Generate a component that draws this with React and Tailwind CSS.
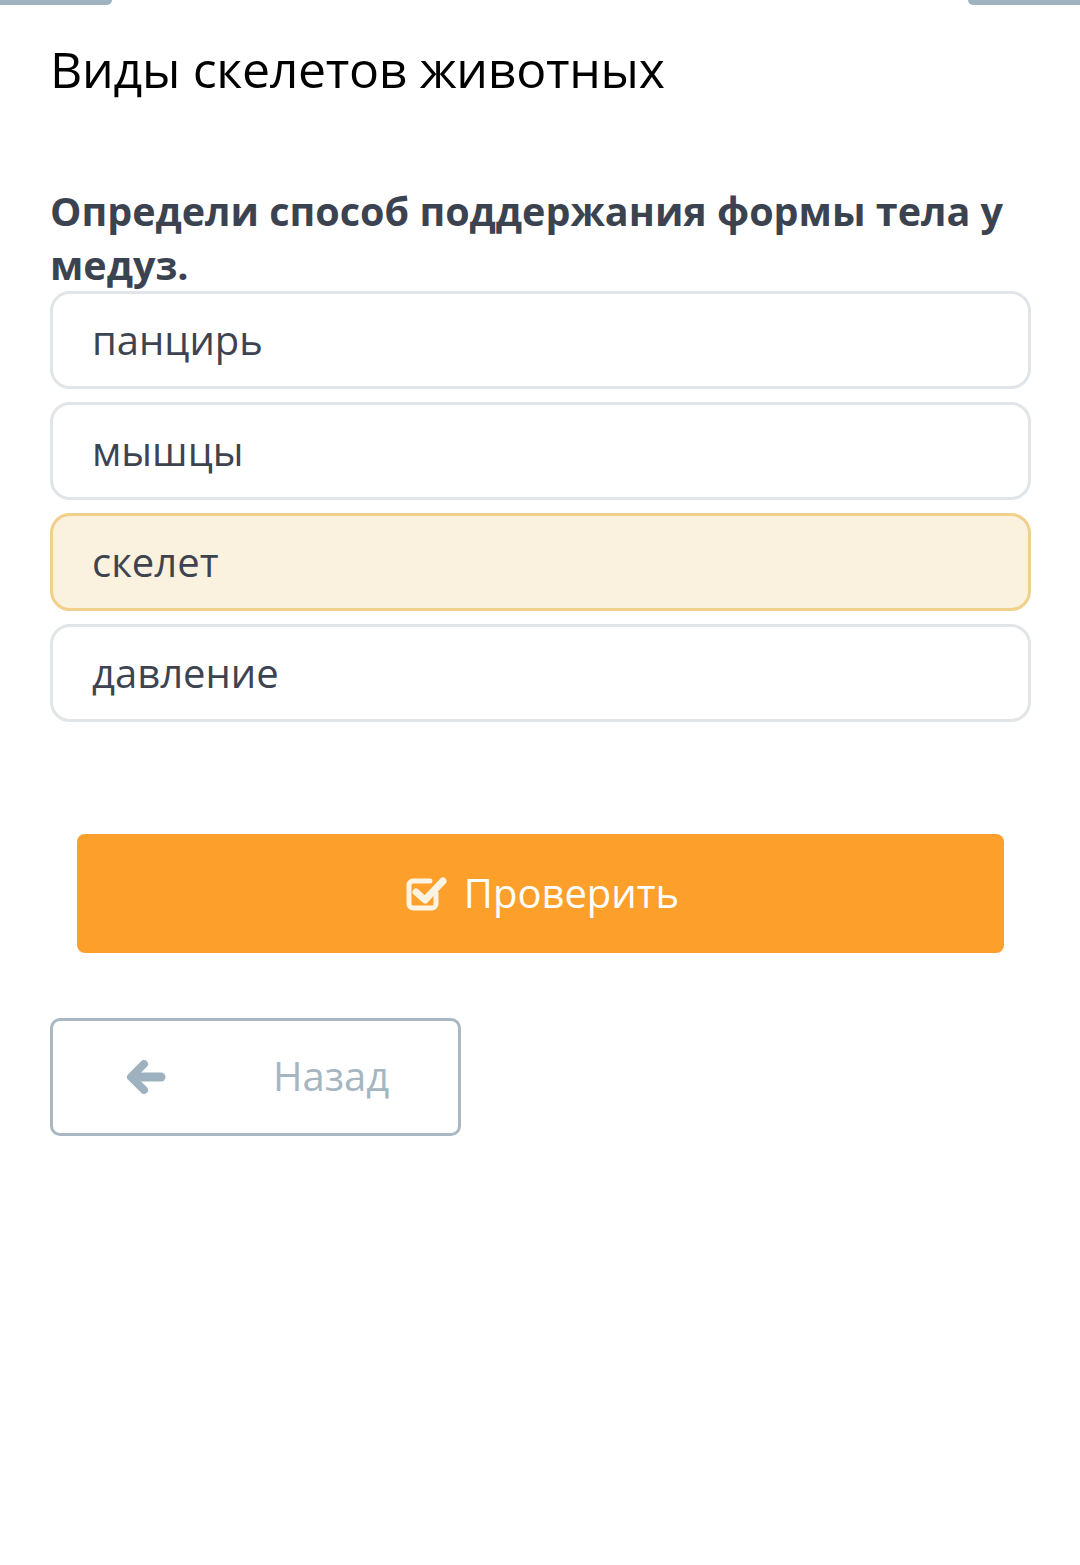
import React from 'react'

const options = ['панцирь', 'мышцы', 'скелет', 'давление']

const App = () => {
  const selected = 2
  return (
    <div className="w-[1080px] h-[1565px] bg-white relative" style={{ fontFamily: '"Open Sans", "Noto Sans", sans-serif' }}>
      {/* top tabs edges */}
      <div className="flex justify-between h-[5px]">
        <div className="w-[112px] h-[5px] bg-[#9fb2bf] rounded-br-[8px]"></div>
        <div className="w-[112px] h-[5px] bg-[#9fb2bf] rounded-bl-[8px]"></div>
      </div>

      <div className="pl-[50px] pr-[49px]">
        <h1 className="text-[50px] leading-[66px] text-black mt-[31px] tracking-[-0.3px]">Виды скелетов животных</h1>

        <p className="mt-[82px] text-[39.5px] leading-[54px] font-bold text-[#3c4350]">
          Определи способ поддержания формы тела у медуз.
        </p>

        <div className="flex flex-col gap-[13px] -mt-[1px]">
          {options.map((o, i) => (
            <div
              key={o}
              className={
                i === selected
                  ? 'h-[98px] rounded-[20px] border-[3px] border-[#f0d08a] bg-[#faf2de] flex items-center pl-[39px] text-[40px] text-[#3d4450]'
                  : 'h-[98px] rounded-[20px] border-[3px] border-[#e2e5e8] bg-white flex items-center pl-[39px] text-[40px] text-[#3d4450]'
              }
            >
              {o}
            </div>
          ))}
        </div>

        <div className="mt-[112px] pl-[27px] pr-[27px]">
          <button className="w-full h-[119px] rounded-[8px] bg-[#fda02b] flex items-center justify-center gap-[16px] text-white text-[40px]">
            <svg className="ml-[4px]" width="42" height="38" viewBox="0 0 42 38" fill="none">
              <path d="M30 18 V29 a4 4 0 0 1 -4 4 H7 a4 4 0 0 1 -4 -4 V10 a4 4 0 0 1 4 -4 H24" stroke="#fdf3e3" strokeWidth="5" strokeLinecap="round" />
              <path d="M10 17 L19 25 L37 6" stroke="#fdf3e3" strokeWidth="7" strokeLinecap="round" strokeLinejoin="round" />
            </svg>
            <span className="leading-none -mt-[2px]">Проверить</span>
          </button>
        </div>

        <button className="mt-[65px] w-[411px] h-[118px] rounded-[10px] border-[3px] border-[#a9b8c2] bg-white flex items-center">
          <svg className="ml-[73px]" width="40" height="34" viewBox="0 0 40 34" fill="none">
            <path d="M18 4 L5 17 L18 30" stroke="#9eb1be" strokeWidth="8" strokeLinecap="round" strokeLinejoin="round" />
            <path d="M7 17 H35" stroke="#9eb1be" strokeWidth="9" strokeLinecap="round" />
          </svg>
          <span className="ml-[107px] text-[40px] text-[#a6b6c1] leading-none -mt-[2px]">Назад</span>
        </button>
      </div>
    </div>
  )
}

export default App
